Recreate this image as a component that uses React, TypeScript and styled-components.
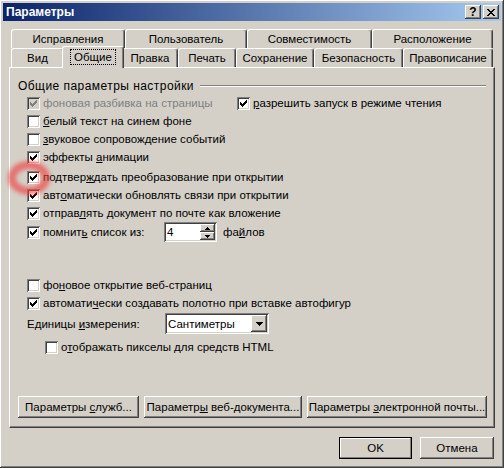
import React from "react";
import styled, { createGlobalStyle, css } from "styled-components";

const FONT = `"Liberation Sans", Arial, sans-serif`;

const GlobalStyle = createGlobalStyle`
  html, body { margin: 0; padding: 0; background: #D4D0C8; }
  body { font-family: ${FONT}; font-size: 12px; }
`;

/* raised / sunken bevels of the classic look */
const raised = css`
  box-shadow: inset -1px -1px #404040, inset 1px 1px #ffffff,
    inset -2px -2px #808080, inset 2px 2px #d4d0c8;
`;
const sunken = css`
  box-shadow: inset 1px 1px #808080, inset -1px -1px #ffffff,
    inset 2px 2px #404040, inset -2px -2px #d4d0c8;
`;

const Window = styled.div`
  position: relative;
  box-sizing: border-box;
  width: 504px;
  height: 468px;
  padding: 3px;
  background: #d4d0c8;
  ${raised};
  display: flex;
  flex-direction: column;
  font-family: ${FONT};
  font-size: 11.5px;
  color: #000;
`;

const TitleBar = styled.div`
  height: 18px;
  flex: none;
  display: flex;
  align-items: center;
  padding: 0 2px 0 3px;
  background: linear-gradient(to right, #0a246a, #a6caf0);
`;

const Title = styled.div`
  flex: 1;
  color: #fff;
  font-weight: bold;
  font-size: 12px;
`;

const CaptionButton = styled.div`
  box-sizing: border-box;
  width: 16px;
  height: 14px;
  margin-left: 2px;
  background: #d4d0c8;
  ${raised};
  display: flex;
  align-items: center;
  justify-content: center;
  font-weight: bold;
  font-size: 12px;
  line-height: 1;
`;

const Body = styled.div`
  flex: 1;
  display: flex;
  flex-direction: column;
  padding: 8px 6px 0 6px;
`;

const TabStrip = styled.div`
  display: flex;
  flex-direction: column;
  padding-left: 2px;
  font-size: 11.5px;
`;

const TabRow = styled.div`
  display: flex;
  height: 19px;
`;

const Tab = styled.div<{ $w: number; $active?: boolean }>`
  box-sizing: border-box;
  flex: none;
  width: ${(p) => p.$w}px;
  height: 19px;
  display: flex;
  align-items: center;
  justify-content: center;
  padding-bottom: 1px;
  background: #d4d0c8;
  border-top: 1px solid #fff;
  border-left: 1px solid #fff;
  border-right: 1px solid #404040;
  border-radius: 3px 3px 0 0;
  box-shadow: inset -1px 0 #808080;
  white-space: nowrap;
  ${(p) =>
    p.$active &&
    css`
      position: relative;
      z-index: 1;
      width: ${p.$w + 4}px;
      height: 22px;
      margin: -2px -2px 0 -2px;
      padding-bottom: 2px;
    `}
`;

const Focus = styled.span`
  border: 1px dotted #000;
  padding: 0 3px;
  line-height: 14px;
`;

const Panel = styled.div`
  box-sizing: border-box;
  width: 486px;
  height: 361px;
  border-top: 1px solid #fff;
  border-left: 1px solid #fff;
  border-right: 1px solid #404040;
  border-bottom: 1px solid #404040;
  box-shadow: inset -1px -1px #808080;
  padding: 11px 8px 9px 8px;
  display: flex;
  flex-direction: column;
`;

const GroupHeader = styled.div`
  display: flex;
  align-items: center;
  height: 13px;
`;

const GroupTitle = styled.span`
  font-size: 12px;
  letter-spacing: 0.45px;
  white-space: nowrap;
`;

const Etched = styled.div`
  flex: 1;
  height: 0;
  margin: 1px 0 0 6px;
  border-top: 1px solid #808080;
  border-bottom: 1px solid #fff;
`;

const Row = styled.div<{ $mt?: number; $h?: number; $indent?: number }>`
  display: flex;
  align-items: center;
  height: ${(p) => p.$h ?? 18}px;
  margin-top: ${(p) => p.$mt ?? 0}px;
  padding-left: ${(p) => p.$indent ?? 9}px;
`;

const Cell = styled.div<{ $w: number }>`
  flex: none;
  width: ${(p) => p.$w}px;
  display: flex;
  align-items: center;
`;

const OptionLabel = styled.label<{ $disabled?: boolean }>`
  display: flex;
  align-items: center;
  white-space: nowrap;
  color: ${(p) => (p.$disabled ? "#808080" : "#000")};
`;

const Caption = styled.span`
  white-space: pre;
`;

const Box = styled.span<{ $disabled?: boolean }>`
  box-sizing: border-box;
  flex: none;
  width: 13px;
  height: 13px;
  margin-right: 3px;
  background: ${(p) => (p.$disabled ? "#d4d0c8" : "#fff")};
  ${sunken};
  display: flex;
  align-items: center;
  justify-content: center;
`;

const Accel = styled.span`
  text-decoration: underline;
  text-underline-offset: 1px;
`;

const Spinner = styled.div`
  box-sizing: border-box;
  flex: none;
  width: 53px;
  height: 20px;
  padding: 2px;
  background: #fff;
  ${sunken};
  display: flex;
`;

const SpinValue = styled.div`
  flex: 1;
  padding-left: 1px;
  line-height: 16px;
`;

const SpinButtons = styled.div`
  flex: none;
  width: 15px;
  display: flex;
  flex-direction: column;
`;

const SpinHalf = styled.div`
  box-sizing: border-box;
  flex: 1;
  background: #d4d0c8;
  ${raised};
  display: flex;
  align-items: center;
  justify-content: center;
`;

const Suffix = styled.span`
  margin-left: 6px;
`;

const Combo = styled.div`
  box-sizing: border-box;
  flex: none;
  width: 104px;
  height: 21px;
  padding: 2px;
  background: #fff;
  ${sunken};
  display: flex;
  align-items: center;
`;

const ComboValue = styled.div`
  flex: 1;
  padding-left: 1px;
`;

const ComboButton = styled.div`
  box-sizing: border-box;
  width: 16px;
  height: 17px;
  background: #d4d0c8;
  ${raised};
  display: flex;
  align-items: center;
  justify-content: center;
`;

const ButtonRow = styled.div<{ $gap: number }>`
  display: flex;
  gap: ${(p) => p.$gap}px;
  margin-top: auto;
`;

const Button = styled.button<{ $w: number; $default?: boolean }>`
  box-sizing: border-box;
  flex: none;
  width: ${(p) => p.$w}px;
  height: 22px;
  padding: 0;
  border: none;
  background: #d4d0c8;
  font-family: ${FONT};
  font-size: 11.5px;
  color: #000;
  white-space: pre;
  overflow: visible;
  ${raised};
  ${(p) =>
    p.$default &&
    css`
      box-shadow: inset 0 0 0 1px #000, inset -2px -2px #808080,
        inset 2px 2px #fff;
    `}
`;

const Footer = styled.div`
  display: flex;
  justify-content: flex-end;
  gap: 8px;
  margin-top: 9px;
  padding-right: 1px;
`;

const Mark = styled.svg`
  position: absolute;
  left: 0;
  top: 150px;
  pointer-events: none;
`;

const CHECK =
  "M6 0h1v1h-1z M5 1h2v1h-2z M0 2h1v1h-1z M4 2h3v1h-3z M0 3h2v1h-2z M3 3h3v1h-3z M0 4h5v1h-5z M1 5h3v1h-3z M2 6h1v1h-1z";

function CheckMark({ color }: { color: string }) {
  return (
    <svg width="7" height="7" viewBox="0 0 7 7" shapeRendering="crispEdges">
      <path d={CHECK} fill={color} />
    </svg>
  );
}

/* "&" marks the mnemonic letter */
function Text({ s }: { s: string }) {
  const i = s.indexOf("&");
  if (i < 0) return <>{s}</>;
  return (
    <>
      {s.slice(0, i)}
      <Accel>{s[i + 1]}</Accel>
      {s.slice(i + 2)}
    </>
  );
}

function Option({
  label,
  checked,
  disabled,
}: {
  label: string;
  checked?: boolean;
  disabled?: boolean;
}) {
  return (
    <OptionLabel $disabled={disabled}>
      <Box $disabled={disabled}>
        {checked && <CheckMark color={disabled ? "#808080" : "#000"} />}
      </Box>
      <Caption>
        <Text s={label} />
      </Caption>
    </OptionLabel>
  );
}

const backTabs = [
  { t: "Исправления", w: 114 },
  { t: "Пользователь", w: 122 },
  { t: "Совместимость", w: 125 },
  { t: "Расположение", w: 121 },
];

const frontTabs = [
  { t: "Вид", w: 53 },
  { t: "Общие", w: 58, active: true },
  { t: "Правка", w: 56 },
  { t: "Печать", w: 58 },
  { t: "Сохранение", w: 78 },
  { t: "Безопасность", w: 89 },
  { t: "Правописание", w: 90 },
];

export default function App() {
  return (
    <>
      <GlobalStyle />
      <Window>
        <TitleBar>
          <Title>Параметры</Title>
          <CaptionButton>?</CaptionButton>
          <CaptionButton>
            <svg width="8" height="7" viewBox="0 0 8 7" shapeRendering="crispEdges">
              <path
                d="M0 0h2v1h-2z M6 0h2v1h-2z M1 1h2v1h-2z M5 1h2v1h-2z M2 2h4v1h-4z M3 3h2v1h-2z M2 4h4v1h-4z M1 5h2v1h-2z M5 5h2v1h-2z M0 6h2v1h-2z M6 6h2v1h-2z"
                fill="#000"
              />
            </svg>
          </CaptionButton>
        </TitleBar>

        <Body>
          <TabStrip>
            <TabRow>
              {backTabs.map((tab) => (
                <Tab key={tab.t} $w={tab.w}>
                  {tab.t}
                </Tab>
              ))}
            </TabRow>
            <TabRow>
              {frontTabs.map((tab) => (
                <Tab key={tab.t} $w={tab.w} $active={tab.active}>
                  {tab.active ? <Focus>{tab.t}</Focus> : tab.t}
                </Tab>
              ))}
            </TabRow>
          </TabStrip>

          <Panel>
            <GroupHeader>
              <GroupTitle>Общие параметры настройки</GroupTitle>
              <Etched />
            </GroupHeader>

            <Row $mt={2}>
              <Cell $w={210}>
                <Option label="фоновая разбивка на страницы" checked disabled />
              </Cell>
              <Option label="&разрешить запуск в режиме чтения" checked />
            </Row>
            <Row>
              <Option label="&белый текст на синем фоне" />
            </Row>
            <Row>
              <Option label="&звуковое сопровождение событий" />
            </Row>
            <Row>
              <Option label="эффекты &анимации" checked />
            </Row>
            <Row $mt={2}>
              <Option label="подтвер&ждать преобразование при открытии" checked />
            </Row>
            <Row>
              <Option label="авт&оматически обновлять связи при открытии" checked />
            </Row>
            <Row>
              <Option label="отправ&лять документ по почте как вложение" checked />
            </Row>
            <Row $h={20}>
              <Cell $w={137}>
                <Option label="помнит&ь список из:" checked />
              </Cell>
              <Spinner>
                <SpinValue>4</SpinValue>
                <SpinButtons>
                  <SpinHalf>
                    <svg width="5" height="3" viewBox="0 0 5 3" shapeRendering="crispEdges">
                      <path d="M2 0h1v1h-1z M1 1h3v1h-3z M0 2h5v1h-5z" fill="#000" />
                    </svg>
                  </SpinHalf>
                  <SpinHalf>
                    <svg width="5" height="3" viewBox="0 0 5 3" shapeRendering="crispEdges">
                      <path d="M0 0h5v1h-5z M1 1h3v1h-3z M2 2h1v1h-1z" fill="#000" />
                    </svg>
                  </SpinHalf>
                </SpinButtons>
              </Spinner>
              <Suffix>
                <Text s="фа&йлов" />
              </Suffix>
            </Row>

            <Row $mt={34}>
              <Option label="фо&новое открытие веб-страниц" />
            </Row>
            <Row>
              <Option label="автомати&чески создавать полотно при вставке автофигур" checked />
            </Row>
            <Row $h={21} $mt={1}>
              <Cell $w={138}>
                <Caption>
                  <Text s="Единицы &измерения:" />
                </Caption>
              </Cell>
              <Combo>
                <ComboValue>Сантиметры</ComboValue>
                <ComboButton>
                  <svg width="7" height="4" viewBox="0 0 7 4" shapeRendering="crispEdges">
                    <path d="M0 0h7v1h-7z M1 1h5v1h-5z M2 2h3v1h-3z M3 3h1v1h-1z" fill="#000" />
                  </svg>
                </ComboButton>
              </Combo>
            </Row>
            <Row $indent={27} $mt={4}>
              <Option label="о&тображать пикселы для средств HTML" />
            </Row>

            <ButtonRow $gap={5}>
              <Button $w={121}>
                <Text s="Параметры &служб..." />
              </Button>
              <Button $w={158}>
                <Text s="Параметр&ы веб-документа..." />
              </Button>
              <Button $w={180}>
                <Text s="Параметры &электронной почты..." />
              </Button>
            </ButtonRow>
          </Panel>

          <Footer>
            <Button $w={73} $default>
              OK
            </Button>
            <Button $w={74}>Отмена</Button>
          </Footer>
        </Body>

        {/* soft red marker ring around a checkbox */}
        <Mark width="70" height="60" viewBox="0 0 70 60">
          <defs>
            <filter id="soft" x="-30%" y="-30%" width="160%" height="160%">
              <feGaussianBlur stdDeviation="2" />
            </filter>
          </defs>
          <ellipse
            cx="29"
            cy="28"
            rx="17"
            ry="13"
            fill="none"
            stroke="#f03c3c"
            strokeWidth="8"
            opacity="0.65"
            filter="url(#soft)"
          />
        </Mark>
      </Window>
    </>
  );
}
